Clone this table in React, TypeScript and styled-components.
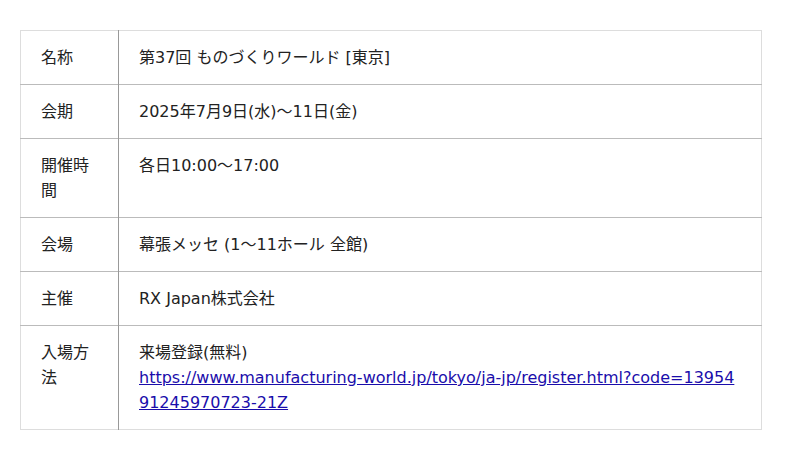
import React from 'react';
import styled, { createGlobalStyle } from 'styled-components';

const GlobalStyle = createGlobalStyle`
  body {
    margin: 0;
    background: #fff;
    font-family: "DejaVu Sans", "Noto Sans CJK JP", sans-serif;
    color: #222;
  }
`;

const Page = styled.div`
  padding: 30px 38px 30px 20px;
`;

const Table = styled.table`
  width: 742px;
  border-collapse: collapse;
  border: 1px solid #ddd;
  font-size: 16px;
  line-height: 25px;
`;

const Row = styled.tr`
  border-bottom: 1px solid #bbb;
  &:last-child { border-bottom: 1px solid #ddd; }
`;

const Label = styled.th`
  width: 57px;
  padding: 14px 20px;
  text-align: left;
  font-weight: normal;
  vertical-align: top;
  border-right: 1px solid #999;
`;

const Value = styled.td`
  padding: 14px 20px;
  vertical-align: top;
  overflow-wrap: anywhere;
  word-break: break-all;
`;

const Link = styled.a`
  color: #1a0dab;
  text-decoration: underline;
`;

const rows: { label: string; value: React.ReactNode }[] = [
  { label: '名称', value: '第37回 ものづくりワールド [東京]' },
  { label: '会期', value: '2025年7月9日(水)〜11日(金)' },
  { label: '開催時間', value: '各日10:00〜17:00' },
  { label: '会場', value: '幕張メッセ (1〜11ホール 全館)' },
  { label: '主催', value: 'RX Japan株式会社' },
  {
    label: '入場方法',
    value: (
      <>
        来場登録(無料)
        <br />
        <Link href="#">
          https://www.manufacturing-world.jp/tokyo/ja-jp/register.html?code=1395491245970723-21Z
        </Link>
      </>
    ),
  },
];

export default function App() {
  return (
    <>
      <GlobalStyle />
      <Page>
        <Table>
          <tbody>
            {rows.map((r) => (
              <Row key={r.label}>
                <Label>{r.label}</Label>
                <Value>{r.value}</Value>
              </Row>
            ))}
          </tbody>
        </Table>
      </Page>
    </>
  );
}
